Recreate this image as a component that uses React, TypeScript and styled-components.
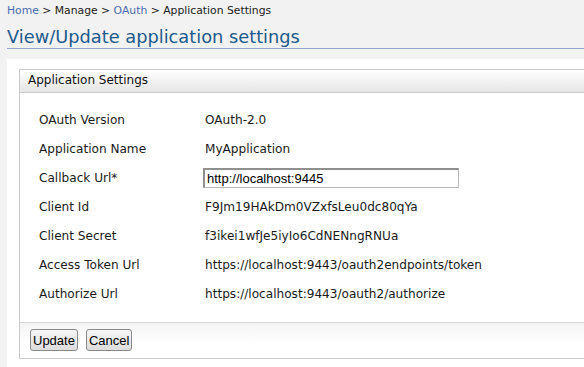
import React from "react";
import styled, { createGlobalStyle } from "styled-components";

const Global = createGlobalStyle`
  html, body { margin: 0; padding: 0; background: #f2f2f2; }
  body { font-family: "DejaVu Sans", Verdana, sans-serif; }
`;

const Page = styled.div`
  width: 584px;
  height: 367px;
  overflow: hidden;
  background: #f2f2f2;
`;

const Breadcrumb = styled.div`
  padding: 4px 0 0 7px;
  height: 15px;
  font-size: 10.8px;
  line-height: 14px;
  color: #222;
`;

const Crumb = styled.span<{ $link?: boolean }>`
  color: ${(p) => (p.$link ? "#4a6cae" : "#222")};
`;

const Title = styled.h2`
  margin: 0 0 0 7px;
  padding: 6px 0 0;
  font-size: 17.8px;
  font-weight: normal;
  line-height: 23px;
  color: #1e5a8c;
  border-bottom: 1px solid #8ea5d1;
`;

const Content = styled.div`
  margin: 10px 0 0 7px;
  padding: 10px 0 10px 12px;
  background: #fff;
  height: 300px;
`;

const Panel = styled.div`
  border: 1px solid #cacaca;
  border-right: none;
`;

const PanelHeader = styled.div`
  height: 22px;
  padding-left: 8px;
  font-size: 12px;
  line-height: 21px;
  color: #111;
  background: linear-gradient(#ffffff, #e5e5e5);
  border-bottom: 1px solid #cacaca;
`;

const Grid = styled.div`
  display: grid;
  grid-template-columns: 166px 1fr;
  grid-auto-rows: 29px;
  align-items: center;
  padding: 12px 0 14px 19px;
  font-size: 12.1px;
  color: #1a1a1a;
`;

const Label = styled.div``;

const Value = styled.div``;

const TextInput = styled.input`
  box-sizing: border-box;
  width: 256px;
  height: 20px;
  margin-left: -2px;
  padding: 0 2px;
  font-family: "Liberation Sans", Arial, sans-serif;
  font-size: 13px;
  color: #000;
  border: 1px solid #b9b9b9;
  border-top-color: #8f8f8f;
  border-left-color: #8f8f8f;
  border-width: 2px 1px 1px 2px;
  background: #fff;
  outline: none;
`;

const Footer = styled.div`
  display: flex;
  gap: 8px;
  padding: 6px 0 7px 10px;
  border-top: 1px solid #d4d4d4;
  background: linear-gradient(#f4f4f4, #ffffff 60%);
`;

const Button = styled.button`
  height: 22px;
  padding: 0 2px;
  font-family: "Liberation Sans", Arial, sans-serif;
  font-size: 13px;
  color: #000;
  border: 1px solid #8a8a8a;
  border-radius: 3px;
  background: linear-gradient(#f6f6f6, #dcdcdc);
`;

const rows: [string, string][] = [
  ["OAuth Version", "OAuth-2.0"],
  ["Application Name", "MyApplication"],
  ["Callback Url*", ""],
  ["Client Id", "F9Jm19HAkDm0VZxfsLeu0dc80qYa"],
  ["Client Secret", "f3ikei1wfJe5iyIo6CdNENngRNUa"],
  ["Access Token Url", "https://localhost:9443/oauth2endpoints/token"],
  ["Authorize Url", "https://localhost:9443/oauth2/authorize"],
];

export default function App() {
  return (
    <Page>
      <Global />
      <Breadcrumb>
        <Crumb $link>Home</Crumb> &gt; Manage &gt; <Crumb $link>OAuth</Crumb> &gt; Application Settings
      </Breadcrumb>
      <Title>View/Update application settings</Title>
      <Content>
        <Panel>
          <PanelHeader>Application Settings</PanelHeader>
          <Grid>
            {rows.map(([l, v]) => (
              <React.Fragment key={l}>
                <Label>{l}</Label>
                <Value>
                  {l === "Callback Url*" ? (
                    <TextInput defaultValue="http://localhost:9445" />
                  ) : (
                    v
                  )}
                </Value>
              </React.Fragment>
            ))}
          </Grid>
          <Footer>
            <Button>Update</Button>
            <Button>Cancel</Button>
          </Footer>
        </Panel>
      </Content>
    </Page>
  );
}
